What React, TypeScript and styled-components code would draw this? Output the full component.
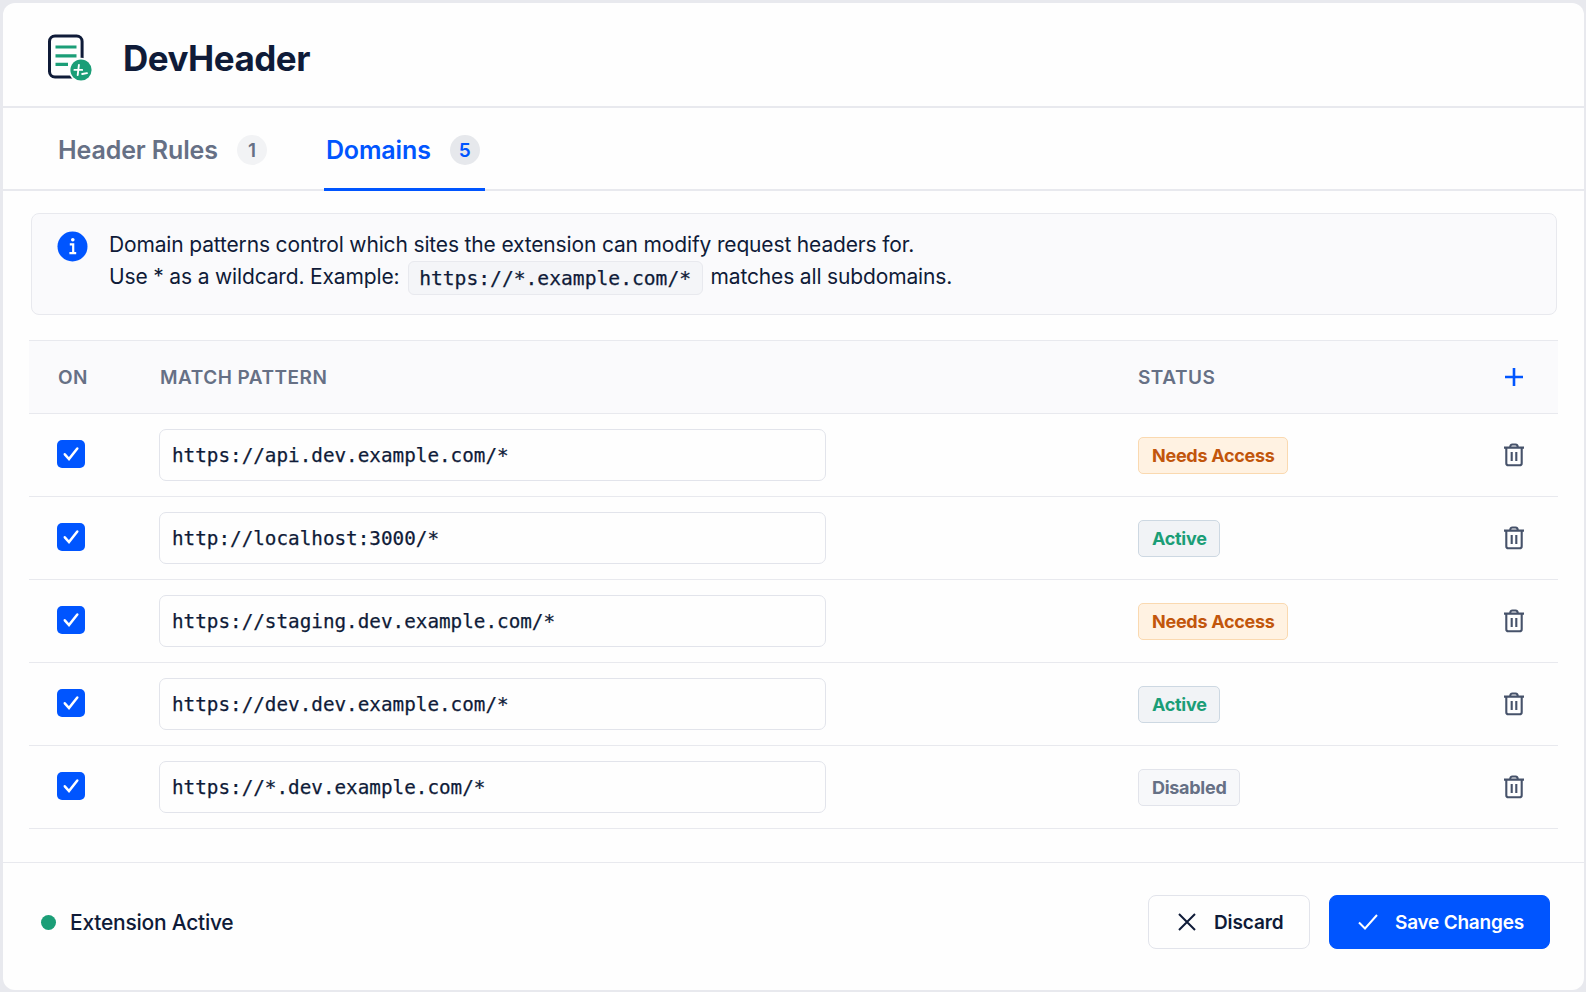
import React, { useState } from "react";
import styled, { createGlobalStyle, css } from "styled-components";

const ink = "#0f1b38";
const muted = "#667085";
const blue = "#0055ff";
const green = "#1b9e77";
const line = "#e8e9ee";
const sans = `Inter, "Liberation Sans", sans-serif`;
const mono = `"DejaVu Sans Mono", "Liberation Mono", monospace`;

const GlobalStyle = createGlobalStyle`
  *, *::before, *::after { box-sizing: border-box; }
  body { margin: 0; background: #e8e9ee; font-family: ${sans}; color: ${ink}; }
  button { font: inherit; color: inherit; background: none; border: 0; padding: 0; cursor: pointer; }
`;

const Page = styled.div`
  height: 992px;
  padding: 3px 2px 2px 3px;
`;

const Card = styled.div`
  height: 100%;
  display: flex;
  flex-direction: column;
  background: #fefefe;
  border-radius: 12px;
  overflow: hidden;
`;

const Header = styled.header`
  height: 105px;
  display: flex;
  align-items: center;
  gap: 29px;
  padding: 6px 0 0 44px;
  border-bottom: 2px solid ${line};
`;

const Title = styled.h1`
  margin: 0;
  font-size: 35px;
  line-height: 42px;
  font-weight: 700;
  letter-spacing: -0.5px;
`;

const Tabs = styled.nav`
  height: 83px;
  display: flex;
  gap: 52px;
  padding-left: 53px;
  border-bottom: 2px solid ${line};
`;

const Tab = styled.button<{ $active?: boolean }>`
  height: 83px;
  display: flex;
  align-items: center;
  gap: 19px;
  padding: 0 5px 0 2px;
  font-size: 25px;
  font-weight: 600;
  letter-spacing: -0.12px;
  color: ${(p) => (p.$active ? blue : muted)};
  border-top: 3px solid transparent;
  border-bottom: 3px solid ${(p) => (p.$active ? blue : "transparent")};
`;

const Count = styled.span<{ $active?: boolean }>`
  width: 30px;
  height: 30px;
  display: grid;
  place-items: center;
  padding-top: 1px;
  border-radius: 50%;
  font-size: 19px;
  background: ${(p) => (p.$active ? "#e6e8ec" : "#f2f3f5")};
`;

const Main = styled.main`
  flex: 1;
  padding: 22px 26px 0 26px;
`;

const Info = styled.section`
  height: 102px;
  display: flex;
  gap: 21px;
  margin: 0 1px 0 2px;
  padding: 17px 25px 0;
  background: #fafafc;
  border: 1px solid ${line};
  border-radius: 8px;
`;

const InfoIcon = styled.svg`
  flex: none;
`;

const InfoText = styled.p`
  margin: -2px 0 0;
  font-size: 21px;
  line-height: 32px;
  letter-spacing: -0.155px;
`;

const Code = styled.code`
  display: inline-block;
  height: 34px;
  margin: -3px 8px 0 3px;
  padding: 0 10.5px 0 10px;
  font-family: ${mono};
  font-size: 19.65px;
  line-height: 34px;
  letter-spacing: 0;
  vertical-align: -1px;
  background: #f4f5f8;
  border: 1px solid ${line};
  border-radius: 6px;
  -webkit-text-stroke: 0.25px ${ink};
`;

const Table = styled.section`
  margin-top: 25px;
`;

const rowGrid = css`
  display: grid;
  grid-template-columns: 102px 978px 1fr 88px;
  padding-left: 28px;
  align-items: center;
`;

const HeadRow = styled.div`
  ${rowGrid}
  height: 74px;
  font-size: 19px;
  font-weight: 600;
  letter-spacing: 0.5px;
  color: ${muted};
  background: #fafafc;
  border-top: 1px solid ${line};
  border-bottom: 1px solid ${line};
`;

const HeadCell = styled.span`
  padding-left: 1px;
`;

const Row = styled.div`
  ${rowGrid}
  height: 83px;
  border-bottom: 1px solid ${line};
`;

const Checkbox = styled.button<{ $on: boolean }>`
  width: 28px;
  height: 28px;
  display: grid;
  place-items: center;
  margin-bottom: 3px;
  border-radius: 5px;
  background: ${(p) => (p.$on ? blue : "#fff")};
  box-shadow: ${(p) => (p.$on ? "none" : `inset 0 0 0 1px ${muted}`)};
`;

const Pattern = styled.input`
  width: 667px;
  height: 52px;
  padding: 1px 12px 0;
  font-family: ${mono};
  font-size: 19.3px;
  color: ${ink};
  background: #fefefe;
  border: 1px solid #e2e4eb;
  border-radius: 7px;
  outline: none;
  -webkit-text-stroke: 0.25px ${ink};
`;

type Status = "Needs Access" | "Active" | "Disabled";

const badgeTone = {
  "Needs Access": css`color: #c2560c; background: #fff2e2; border-color: #fad9b0;`,
  Active: css`color: ${green}; background: #f1f3f6; border-color: #cdd8e2;`,
  Disabled: css`color: ${muted}; background: #f7f8fa; border-color: #e2e4eb;`,
};

const Badge = styled.span<{ $status: Status }>`
  justify-self: start;
  height: 37px;
  margin-left: 1px;
  padding: 0 12.5px 0 13px;
  font-size: 18px;
  line-height: 36px;
  font-weight: 650;
  letter-spacing: -0.28px;
  border: 1px solid;
  border-radius: 5px;
  ${(p) => badgeTone[p.$status]}
`;

const IconButton = styled.button`
  justify-self: center;
  display: grid;
  place-items: center;
  width: 28px;
  height: 28px;
`;

const Footer = styled.footer`
  height: 128px;
  display: flex;
  align-items: flex-start;
  gap: 19px;
  padding: 32px 34px 0 38px;
  border-top: 1px solid ${line};
`;

const State = styled.div`
  height: 54px;
  display: flex;
  align-items: center;
  gap: 14px;
  margin-right: auto;
  font-size: 21px;
  font-weight: 500;
  letter-spacing: -0.25px;
`;

const Dot = styled.span`
  width: 15px;
  height: 15px;
  border-radius: 50%;
  background: ${green};
`;

const Action = styled.button<{ $primary?: boolean }>`
  width: ${(p) => (p.$primary ? 221 : 162)}px;
  height: 54px;
  display: flex;
  align-items: center;
  gap: 17px;
  padding-left: 28px;
  font-size: 19px;
  font-weight: 600;
  letter-spacing: ${(p) => (p.$primary ? -0.22 : -0.12)}px;
  white-space: nowrap;
  color: ${(p) => (p.$primary ? "#fff" : ink)};
  background: ${(p) => (p.$primary ? blue : "#fefefe")};
  border: 1px solid ${(p) => (p.$primary ? blue : "#e2e4eb")};
  border-radius: 8px;
`;

const Logo = () => (
  <svg width="47" height="48" viewBox="0 0 47 48" fill="none">
    <rect x="2.5" y="2" width="32.6" height="41" rx="5.5" stroke={ink} strokeWidth="3" />
    <path d="M8.5 13h21M8.5 21.8h21M8.5 30.3h12.5" stroke={green} strokeWidth="3.2" />
    <circle cx="34" cy="36" r="12.2" fill="#fefefe" />
    <circle cx="34" cy="36" r="10.6" fill={green} />
    <path d="M31.9 31l-1.2 10M27.4 35.9h7.8M35.2 40l4.8-.9" stroke="#fff" strokeWidth="1.9" strokeLinecap="round" />
  </svg>
);

const Trash = () => (
  <svg width="22" height="24" viewBox="0 0 22 24" fill="none" stroke="#46526a" strokeWidth="2.1">
    <path d="M1 4.6h20M7.2 4.4c0-2 .8-2.9 2.3-2.9h3c1.5 0 2.3.9 2.3 2.9M3.3 4.8v15.4c0 1.4.7 2.1 2.1 2.1h11.2c1.4 0 2.1-.7 2.1-2.1V4.8M8.7 9v9M13.3 9v9" />
  </svg>
);

const initialRows: { pattern: string; status: Status }[] = [
  { pattern: "https://api.dev.example.com/*", status: "Needs Access" },
  { pattern: "http://localhost:3000/*", status: "Active" },
  { pattern: "https://staging.dev.example.com/*", status: "Needs Access" },
  { pattern: "https://dev.dev.example.com/*", status: "Active" },
  { pattern: "https://*.dev.example.com/*", status: "Disabled" },
];

function DomainRow({ pattern, status }: { pattern: string; status: Status }) {
  const [on, setOn] = useState(true);
  return (
    <Row>
      <Checkbox $on={on} role="checkbox" aria-checked={on} onClick={() => setOn(!on)}>
        {on && (
          <svg width="18" height="16" viewBox="0 0 18 16" fill="none" stroke="#fff" strokeWidth="2.5" strokeLinecap="round">
            <path d="M2.8 8.3l4.2 4.7L15.3 2.5" />
          </svg>
        )}
      </Checkbox>
      <Pattern defaultValue={pattern} spellCheck={false} />
      <Badge $status={status}>{status}</Badge>
      <IconButton aria-label="Delete">
        <Trash />
      </IconButton>
    </Row>
  );
}

export default function App() {
  return (
    <Page>
      <GlobalStyle />
      <Card>
        <Header>
          <Logo />
          <Title>DevHeader</Title>
        </Header>
        <Tabs>
          <Tab>
            Header Rules <Count>1</Count>
          </Tab>
          <Tab $active>
            Domains <Count $active>5</Count>
          </Tab>
        </Tabs>
        <Main>
          <Info>
            <InfoIcon width="31" height="31" viewBox="0 0 31 31">
              <circle cx="15.5" cy="15.5" r="15" fill={blue} />
              <circle cx="15.8" cy="8.8" r="1.8" fill="#fff" />
              <path d="M12.8 13.4h3.4v8.6M12.4 22.2h6.8" fill="none" stroke="#fff" strokeWidth="2.2" />
            </InfoIcon>
            <InfoText>
              Domain patterns control which sites the extension can modify request headers for.
              <br />
              Use * as a wildcard. Example: <Code>https://*.example.com/*</Code>
              matches all subdomains.
            </InfoText>
          </Info>
          <Table>
            <HeadRow>
              <HeadCell>ON</HeadCell>
              <HeadCell>MATCH PATTERN</HeadCell>
              <HeadCell>STATUS</HeadCell>
              <IconButton aria-label="Add">
                <svg width="18" height="18" viewBox="0 0 18 18" stroke={blue} strokeWidth="2.6">
                  <path d="M9 0v18M0 9h18" />
                </svg>
              </IconButton>
            </HeadRow>
            {initialRows.map((r) => (
              <DomainRow key={r.pattern} {...r} />
            ))}
          </Table>
        </Main>
        <Footer>
          <State>
            <Dot />
            Extension Active
          </State>
          <Action>
            <svg width="20" height="18" viewBox="0 0 20 18" fill="none" stroke={ink} strokeWidth="2">
              <path d="M2 1l16 16M18 1L2 17" />
            </svg>
            Discard
          </Action>
          <Action $primary>
            <svg width="20" height="16" viewBox="0 0 20 16" fill="none" stroke="#fff" strokeWidth="2">
              <path d="M1 8.5l6 6L19 1" />
            </svg>
            Save Changes
          </Action>
        </Footer>
      </Card>
    </Page>
  );
}
